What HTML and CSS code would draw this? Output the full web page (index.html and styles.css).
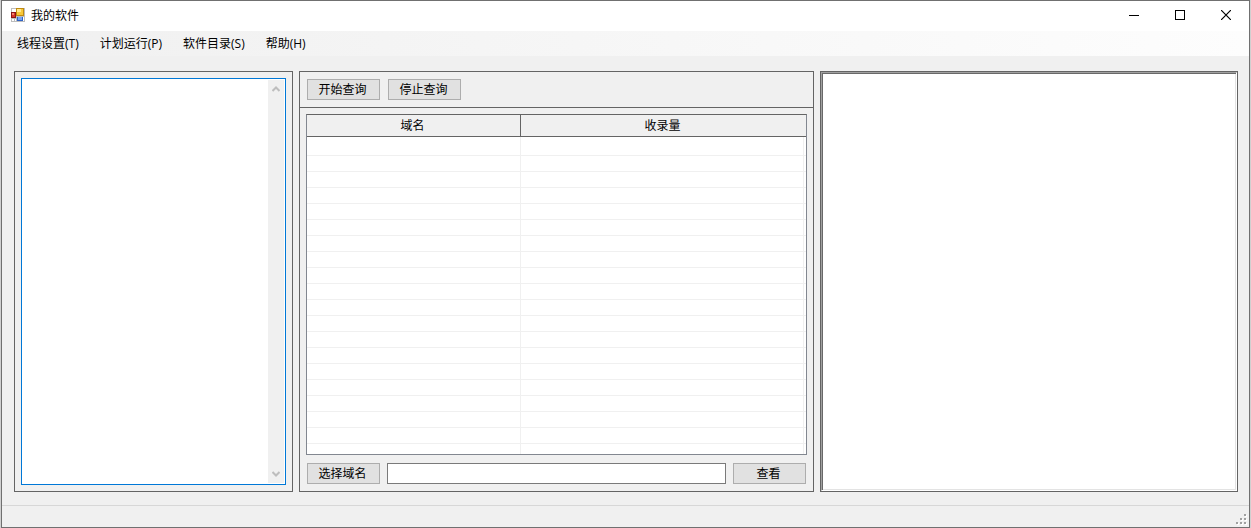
FILE: index.html
```html
<!DOCTYPE html>
<html lang="zh-CN">
<head>
    <meta charset="UTF-8">
    <meta name="viewport" content="width=device-width, initial-scale=1.0">
    <title>我的软件</title>
    <link rel="stylesheet" href="styles.css">
</head>
<body>
    <div class="window">
        <header class="title-bar">
            <svg class="app-icon" width="14" height="14" viewBox="0 0 14 14" shape-rendering="crispEdges">
                <rect width="14" height="14" fill="#bdbdbd"/>
                <rect x="1" y="1" width="4" height="3" fill="#fff"/>
                <rect x="1" y="11" width="2" height="2" fill="#fff"/>
                <rect x="4" y="11" width="1" height="2" fill="#fff"/>
                <rect x="12" y="9" width="1" height="4" fill="#fff"/>
                <rect x="0" y="4" width="5" height="6" fill="#8c1414"/>
                <rect x="1" y="5" width="3" height="4" fill="#d8342a"/>
                <rect x="1" y="5" width="2" height="2" fill="#f08070"/>
                <rect x="5" y="0" width="8" height="8" fill="#c08a10"/>
                <rect x="6" y="1" width="6" height="6" fill="#f8c838"/>
                <rect x="6" y="1" width="4" height="3" fill="#ffe890"/>
                <rect x="6" y="9" width="6" height="4" fill="#2f62c4"/>
                <rect x="7" y="9" width="4" height="3" fill="#78a4f0"/>
            </svg>
            <h1>我的软件</h1>
            <div class="window-buttons">
                <button type="button" aria-label="最小化">
                    <svg width="10" height="10" viewBox="0 0 10 10" shape-rendering="crispEdges"><rect x="0" y="5" width="10" height="1"/></svg>
                </button>
                <button type="button" aria-label="最大化">
                    <svg width="10" height="10" viewBox="0 0 10 10" shape-rendering="crispEdges"><path d="M.5.5h9v9h-9z" fill="none" stroke="#000"/></svg>
                </button>
                <button type="button" aria-label="关闭">
                    <svg width="10" height="10" viewBox="0 0 10 10"><path d="M0 0l10 10M10 0L0 10" fill="none" stroke="#000" stroke-width="1.2"/></svg>
                </button>
            </div>
        </header>

        <nav class="menu-bar">
            <a href="#">线程设置(T)</a>
            <a href="#">计划运行(P)</a>
            <a href="#">软件目录(S)</a>
            <a href="#">帮助(H)</a>
        </nav>

        <main class="panels">
            <section class="panel domain-panel">
                <div class="domain-box">
                    <textarea aria-label="域名"></textarea>
                    <div class="scrollbar">
                        <svg width="8" height="6" viewBox="0 0 8 6"><path d="M.5 5L4 1.5 7.5 5" fill="none" stroke="#bdbdbd" stroke-width="2"/></svg>
                        <svg width="8" height="6" viewBox="0 0 8 6"><path d="M.5 1L4 4.5 7.5 1" fill="none" stroke="#bdbdbd" stroke-width="2"/></svg>
                    </div>
                </div>
            </section>

            <section class="panel query-panel">
                <div class="toolbar">
                    <button type="button" class="btn">开始查询</button>
                    <button type="button" class="btn">停止查询</button>
                </div>
                <div class="query-body">
                    <div class="grid">
                        <table>
                            <colgroup>
                                <col class="col-domain">
                                <col>
                                <col class="col-edge">
                            </colgroup>
                            <thead>
                                <tr><th>域名</th><th colspan="2">收录量</th></tr>
                            </thead>
                            <tbody>
                                <tr class="first"><td></td><td></td><td></td></tr>
                                <tr><td></td><td></td><td></td></tr>
                                <tr><td></td><td></td><td></td></tr>
                                <tr><td></td><td></td><td></td></tr>
                                <tr><td></td><td></td><td></td></tr>
                                <tr><td></td><td></td><td></td></tr>
                                <tr><td></td><td></td><td></td></tr>
                                <tr><td></td><td></td><td></td></tr>
                                <tr><td></td><td></td><td></td></tr>
                                <tr><td></td><td></td><td></td></tr>
                                <tr><td></td><td></td><td></td></tr>
                                <tr><td></td><td></td><td></td></tr>
                                <tr><td></td><td></td><td></td></tr>
                                <tr><td></td><td></td><td></td></tr>
                                <tr><td></td><td></td><td></td></tr>
                                <tr><td></td><td></td><td></td></tr>
                                <tr><td></td><td></td><td></td></tr>
                                <tr><td></td><td></td><td></td></tr>
                                <tr><td></td><td></td><td></td></tr>
                                <tr class="last"><td></td><td></td><td></td></tr>
                            </tbody>
                        </table>
                    </div>
                    <div class="lookup">
                        <button type="button" class="btn">选择域名</button>
                        <input type="text" aria-label="选择域名">
                        <button type="button" class="btn">查看</button>
                    </div>
                </div>
            </section>

            <section class="panel log-panel">
                <textarea class="log" aria-label="日志" readonly></textarea>
            </section>
        </main>

        <footer class="status-bar">
            <svg width="11" height="11" viewBox="0 0 11 11" shape-rendering="crispEdges">
                <path d="M9 1h2v2H9zM5 5h2v2H5zM9 5h2v2H9zM1 9h2v2H1zM5 9h2v2H5zM9 9h2v2H9z" fill="#fff"/>
                <path d="M8 0h2v2H8zM4 4h2v2H4zM8 4h2v2H8zM0 8h2v2H0zM4 8h2v2H4zM8 8h2v2H8z" fill="#a0a0a0"/>
            </svg>
        </footer>
    </div>
</body>
</html>
```
FILE: styles.css
```css
* {
    box-sizing: border-box;
}
body {
    margin: 0;
    padding: 0 1px;
    background: #d0d0d0;
    color: #000;
    font-family: "Open Sans", "Noto Sans CJK SC", sans-serif;
    font-size: 12px;
    line-height: 16px;
}
button, input, textarea {
    margin: 0;
    padding: 0;
    color: inherit;
    font: inherit;
}
svg {
    display: block;
}
.window {
    display: flex;
    flex-direction: column;
    min-height: 100vh;
    border: 1px solid #707070;
    background: #f0f0f0;
}

/* title bar */
.title-bar {
    display: flex;
    align-items: center;
    height: 30px;
    padding: 0 0 2px 9px;
    background: #fff;
}
.title-bar h1 {
    margin: 0 0 0 6px;
    padding-top: 2px;
    font-size: 12px;
    font-weight: normal;
}
.window-buttons {
    display: flex;
    margin-left: auto;
}
.window-buttons button {
    display: flex;
    align-items: center;
    justify-content: center;
    width: 46px;
    height: 28px;
    border: 0;
    background: transparent;
}

/* menu */
.menu-bar {
    display: flex;
    gap: 1px;
    height: 25px;
    padding-left: 5px;
    background: linear-gradient(to right, #f0f0f0, #fdfdfd);
}
.menu-bar a {
    padding: 5px 10px;
    color: #000;
    text-decoration: none;
    white-space: nowrap;
}

/* panels */
.panels {
    display: grid;
    flex: 1;
    grid-template-columns: 279fr 515fr 418fr;
    gap: 6px;
    padding: 15px 11px 13px 12px;
}
.panel {
    display: flex;
    min-width: 0;
    border: 1px solid #646464;
}
.domain-panel {
    padding: 6px;
}
.domain-box {
    display: flex;
    flex: 1;
    padding: 1px;
    border: 1px solid #0078d7;
    background: #fff;
}
textarea {
    flex: 1;
    min-width: 0;
    border: 0;
    outline: 0;
    resize: none;
    background: #fff;
}
.scrollbar {
    display: flex;
    flex-direction: column;
    align-items: center;
    justify-content: space-between;
    width: 16px;
    padding: 6px 0;
    background: #f0f0f0;
}
.query-panel {
    flex-direction: column;
}
.toolbar {
    display: flex;
    gap: 8px;
    padding: 7px;
    border-bottom: 1px solid #646464;
}
.btn {
    width: 73px;
    height: 21px;
    padding-right: 2px;
    border: 1px solid #adadad;
    background: #e1e1e1;
    line-height: 16px;
    white-space: nowrap;
}
.query-body {
    display: flex;
    flex: 1;
    flex-direction: column;
    gap: 8px;
    padding: 6px 6px 7px;
}
.grid {
    display: flex;
    flex: 1;
    border: 1px solid #828790;
    border-top-color: #646464;
    background: #fff;
}
table {
    width: 100%;
    border-spacing: 0;
    table-layout: fixed;
}
.col-domain {
    width: 214px;
}
.col-edge {
    width: 2px;
}
th {
    height: 22px;
    padding: 0 2px 0 0;
    border-bottom: 1px solid #646464;
    background: #f0f0f0;
    font-weight: normal;
}
th:first-child {
    border-right: 1px solid #646464;
}
td {
    height: 16px;
    padding: 0;
    border-right: 1px solid #f0f0f0;
    border-bottom: 1px solid #f0f0f0;
}
td:last-child {
    border-right: 0;
}
.first td {
    height: 19px;
}
.last td {
    height: auto;
    border-bottom: 0;
}
.lookup {
    display: flex;
    gap: 7px;
    padding: 0 1px;
}
.lookup input {
    flex: 1;
    min-width: 0;
    height: 21px;
    padding: 0 3px;
    border: 1px solid #7a7a7a;
    background: #fff;
}
.log {
    border: 1px solid #fff;
    border-top-color: #a0a0a0;
    border-left-color: #a0a0a0;
    box-shadow: inset 1px 1px #696969, inset -1px -1px #e3e3e3;
}

/* status bar */
.status-bar {
    display: flex;
    align-items: flex-end;
    justify-content: flex-end;
    height: 22px;
    padding: 0 2px 2px;
    border-top: 1px solid #d7d7d7;
}
```
